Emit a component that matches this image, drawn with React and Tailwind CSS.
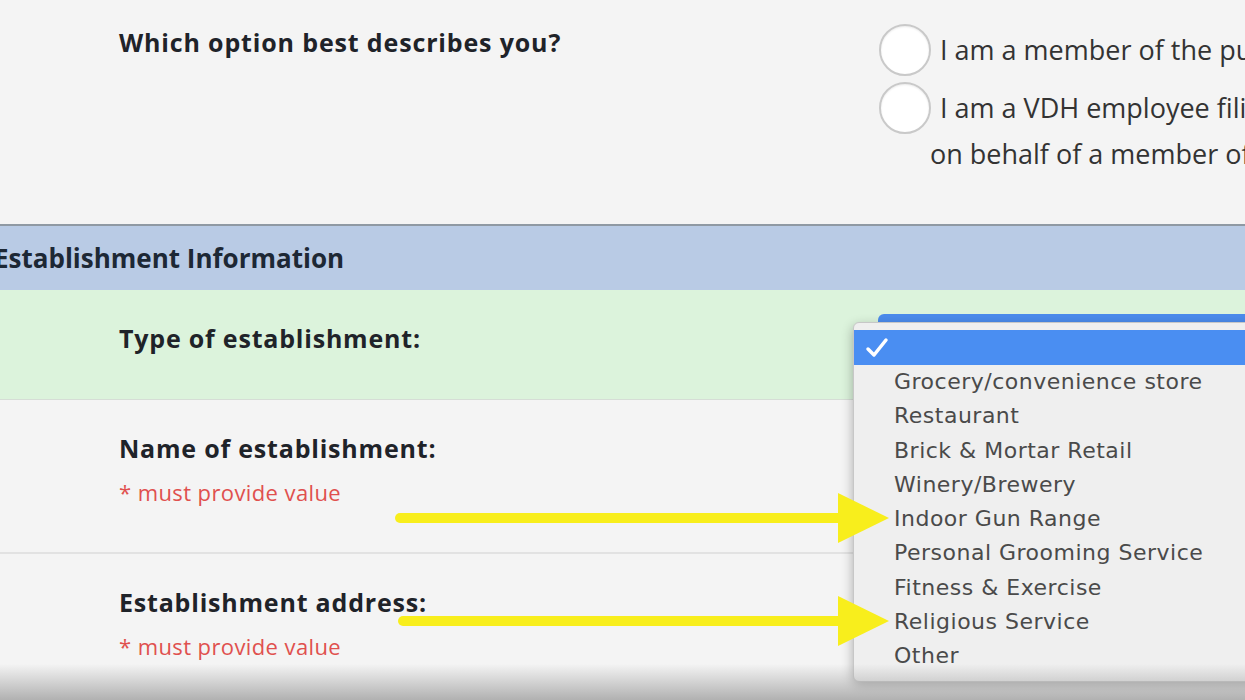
import React from "react";

const options = [
  "Grocery/convenience store",
  "Restaurant",
  "Brick & Mortar Retail",
  "Winery/Brewery",
  "Indoor Gun Range",
  "Personal Grooming Service",
  "Fitness & Exercise",
  "Religious Service",
  "Other",
];

function Radio() {
  return <div className="w-[52px] h-[52px] shrink-0 rounded-full bg-white border-2 border-[#c9c9c9] shadow-[inset_0_1px_2px_rgba(0,0,0,0.08)]" />;
}

export default function App() {
  return (
    <div className="relative w-[1245px] h-[700px] overflow-hidden bg-[#f4f4f4] text-[#1f2329] font-['Open_Sans',sans-serif]">
      {/* question */}
      <div className="h-[224px] flex">
        <div className="w-[860px] shrink-0 pl-[119px] pt-[24px] text-[25px] tracking-[0.85px] font-bold leading-[36px]">Which option best describes you?</div>
        <div className="pl-[19px] pt-[24px] text-[27px] text-[#333] whitespace-nowrap">
          <div className="flex items-center gap-[9px]">
            <Radio />
            <span>I am a member of the public</span>
          </div>
          <div className="flex items-center gap-[9px] mt-[6px]">
            <Radio />
            <span>I am a VDH employee filing</span>
          </div>
          <div className="pl-[51px] leading-[40px]">on behalf of a member of the public</div>
        </div>
      </div>

      {/* section header */}
      <div className="h-[66px] border-t-2 border-[#8f99a3] bg-[#b9cbe5] flex items-center">
        <div className="-ml-[6px] text-[26px] font-bold text-[#1d2835]">Establishment Information</div>
      </div>

      <div className="h-[110px] bg-[#dcf3dc] border-b border-[#d6ddd6] pl-[119px] pt-[30px] text-[25px] tracking-[0.8px] font-bold leading-[36px]">Type of establishment:</div>

      <div className="h-[154px] border-b-2 border-[#e2e2e2] pl-[119px] pt-[30px]">
        <div className="text-[25px] tracking-[0.8px] font-bold leading-[36px]">Name of establishment:</div>
        <div className="mt-[10px] text-[22px] tracking-[0.4px] leading-[32px] text-[#e0504e]">* must provide value</div>
      </div>

      <div className="pl-[119px] pt-[30px]">
        <div className="text-[25px] tracking-[0.8px] font-bold leading-[36px]">Establishment address:</div>
        <div className="mt-[10px] text-[22px] tracking-[0.4px] leading-[32px] text-[#e0504e]">* must provide value</div>
      </div>

      {/* select behind popup */}
      <div className="absolute left-[878px] top-[314px] w-[400px] h-[20px] rounded-t-md bg-[#4b8bec]" />

      {/* native select popup */}
      <div className="absolute left-[853px] top-[322px] w-[420px] h-[360px] rounded-md bg-[#efefef] border border-[#c7c7c7] shadow-[0_4px_12px_rgba(0,0,0,0.3)] pt-[7px] font-['DejaVu_Sans',sans-serif]">
        <div className="h-[35px] bg-[#4a8ef2] flex items-center pl-[11px]">
          <svg width="24" height="22" viewBox="0 0 24 22" fill="none">
            <path d="M3 12 L9 18 L21 3" stroke="#fff" strokeWidth="3.5" strokeLinecap="round" strokeLinejoin="round" />
          </svg>
        </div>
        {options.map((o) => (
          <div key={o} className="h-[34.3px] leading-[34.3px] pl-[40px] text-[22px] tracking-[0.5px] text-[#4a4a4a]">{o}</div>
        ))}
      </div>

      {/* arrows */}
      <svg className="absolute left-0 top-0 pointer-events-none" width="1245" height="700">
        <line x1="400" y1="518" x2="850" y2="518" stroke="#f8ee1c" strokeWidth="10" strokeLinecap="round" />
        <polygon points="838,493 889,518 838,543" fill="#f8ee1c" />
        <line x1="403" y1="621" x2="850" y2="621" stroke="#f8ee1c" strokeWidth="10" strokeLinecap="round" />
        <polygon points="838,596 889,621 838,646" fill="#f8ee1c" />
      </svg>

      <div className="absolute left-0 bottom-0 w-full h-[36px] pointer-events-none bg-gradient-to-b from-[rgba(180,180,180,0)] to-[rgba(165,165,165,0.85)]" />
    </div>
  );
}
